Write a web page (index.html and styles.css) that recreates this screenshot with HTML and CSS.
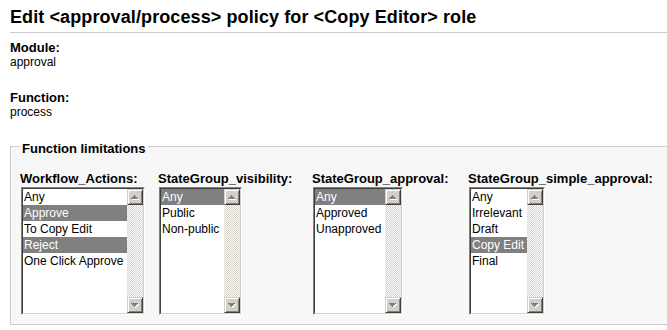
FILE: index.html
```html
<!DOCTYPE html>
<html>
<head>
<meta charset="utf-8">
<title>Edit policy</title>
<link rel="stylesheet" href="styles.css">
</head>
<body>
<div class="page">
  <h1 class="title">Edit &lt;approval/process&gt; policy for &lt;Copy Editor&gt; role</h1>

  <div class="field">
    <div class="field-label">Module:</div>
    <div class="field-value">approval</div>
  </div>

  <div class="field">
    <div class="field-label">Function:</div>
    <div class="field-value">process</div>
  </div>

  <fieldset class="limits">
    <legend class="limits-legend">Function limitations</legend>
    <div class="columns">
      <div class="column column-actions">
        <div class="col-label">Workflow_Actions:</div>
        <div class="listbox">
          <div class="listbox-inner">
            <ul class="options options-actions">
              <li class="option">Any</li>
              <li class="option selected">Approve</li>
              <li class="option">To Copy Edit</li>
              <li class="option selected">Reject</li>
              <li class="option">One Click Approve</li>
            </ul>
            <div class="scrollbar">
              <div class="sb-btn"><svg class="sb-arrow" width="8" height="5" viewBox="0 0 8 5"><path class="arrow-shadow" d="M4 1h1v1h1v1h1v1h1v1H1V4h1V3h1V2h1z"/><path class="arrow-face" d="M3 0h1v1h1v1h1v1h1v1H0V3h1V2h1V1h1z"/></svg></div>
              <div class="sb-track"></div>
              <div class="sb-btn"><svg class="sb-arrow" width="8" height="5" viewBox="0 0 8 5"><path class="arrow-shadow" d="M1 1h7v1H7v1H6v1H5v1H4V4H3V3H2V2H1z"/><path class="arrow-face" d="M0 0h7v1H6v1H5v1H4v1H3V3H2V2H1V1H0z"/></svg></div>
            </div>
          </div>
        </div>
      </div>

      <div class="column column-visibility">
        <div class="col-label">StateGroup_visibility:</div>
        <div class="listbox">
          <div class="listbox-inner">
            <ul class="options options-visibility">
              <li class="option selected">Any</li>
              <li class="option">Public</li>
              <li class="option">Non-public</li>
            </ul>
            <div class="scrollbar">
              <div class="sb-btn"><svg class="sb-arrow" width="8" height="5" viewBox="0 0 8 5"><path class="arrow-shadow" d="M4 1h1v1h1v1h1v1h1v1H1V4h1V3h1V2h1z"/><path class="arrow-face" d="M3 0h1v1h1v1h1v1h1v1H0V3h1V2h1V1h1z"/></svg></div>
              <div class="sb-track"></div>
              <div class="sb-btn"><svg class="sb-arrow" width="8" height="5" viewBox="0 0 8 5"><path class="arrow-shadow" d="M1 1h7v1H7v1H6v1H5v1H4V4H3V3H2V2H1z"/><path class="arrow-face" d="M0 0h7v1H6v1H5v1H4v1H3V3H2V2H1V1H0z"/></svg></div>
            </div>
          </div>
        </div>
      </div>

      <div class="column column-approval">
        <div class="col-label">StateGroup_approval:</div>
        <div class="listbox">
          <div class="listbox-inner">
            <ul class="options options-approval">
              <li class="option selected">Any</li>
              <li class="option">Approved</li>
              <li class="option">Unapproved</li>
            </ul>
            <div class="scrollbar">
              <div class="sb-btn"><svg class="sb-arrow" width="8" height="5" viewBox="0 0 8 5"><path class="arrow-shadow" d="M4 1h1v1h1v1h1v1h1v1H1V4h1V3h1V2h1z"/><path class="arrow-face" d="M3 0h1v1h1v1h1v1h1v1H0V3h1V2h1V1h1z"/></svg></div>
              <div class="sb-track"></div>
              <div class="sb-btn"><svg class="sb-arrow" width="8" height="5" viewBox="0 0 8 5"><path class="arrow-shadow" d="M1 1h7v1H7v1H6v1H5v1H4V4H3V3H2V2H1z"/><path class="arrow-face" d="M0 0h7v1H6v1H5v1H4v1H3V3H2V2H1V1H0z"/></svg></div>
            </div>
          </div>
        </div>
      </div>

      <div class="column column-simple">
        <div class="col-label">StateGroup_simple_approval:</div>
        <div class="listbox">
          <div class="listbox-inner">
            <ul class="options options-simple">
              <li class="option">Any</li>
              <li class="option">Irrelevant</li>
              <li class="option">Draft</li>
              <li class="option selected">Copy Edit</li>
              <li class="option">Final</li>
            </ul>
            <div class="scrollbar">
              <div class="sb-btn"><svg class="sb-arrow" width="8" height="5" viewBox="0 0 8 5"><path class="arrow-shadow" d="M4 1h1v1h1v1h1v1h1v1H1V4h1V3h1V2h1z"/><path class="arrow-face" d="M3 0h1v1h1v1h1v1h1v1H0V3h1V2h1V1h1z"/></svg></div>
              <div class="sb-track"></div>
              <div class="sb-btn"><svg class="sb-arrow" width="8" height="5" viewBox="0 0 8 5"><path class="arrow-shadow" d="M1 1h7v1H7v1H6v1H5v1H4V4H3V3H2V2H1z"/><path class="arrow-face" d="M0 0h7v1H6v1H5v1H4v1H3V3H2V2H1V1H0z"/></svg></div>
            </div>
          </div>
        </div>
      </div>
    </div>
  </fieldset>
</div>
</body>
</html>
```

FILE: styles.css
```css
html, body {
  margin: 0;
  padding: 0;
  overflow: hidden;
  background: #fff;
}

body {
  font-family: "Liberation Sans", Arial, sans-serif;
  color: #000;
}

.page {
  width: 720px;
  padding-left: 10px;
}

.title {
  margin: 0;
  padding: 7px 0 5px;
  font-size: 18px;
  line-height: 20px;
  font-weight: bold;
  letter-spacing: 0.1px;
  border-bottom: 1px solid #cccccc;
}

.field {
  margin-top: 7px;
}

.field + .field {
  margin-top: 20px;
}

.field-label {
  font-size: 13px;
  line-height: 15px;
  font-weight: bold;
}

.field-value {
  font-size: 12px;
  line-height: 15px;
}

.limits {
  margin: 16px 0 0;
  padding: 15px 9px 9px;
  border: 1px solid #cccccc;
  background: #f7f7f7;
  min-inline-size: 0;
}

.limits-legend {
  padding: 5px 2px 0;
  font-size: 13px;
  line-height: 15px;
  font-weight: bold;
}

.columns {
  display: flex;
  align-items: flex-start;
}

.column-actions { width: 138px; }
.column-visibility { width: 154px; }
.column-approval { width: 156px; }
.column-simple { width: 180px; }

.col-label {
  font-size: 13px;
  line-height: 15px;
  font-weight: bold;
  white-space: nowrap;
}

.listbox {
  display: inline-block;
  vertical-align: top;
  margin: 1px 0 0 1px;
  border: 1px solid;
  border-color: #808080 #ffffff #ffffff #808080;
}

.listbox-inner {
  display: flex;
  height: 124px;
  border: 1px solid;
  border-color: #404040 #d4d0c8 #d4d0c8 #404040;
  background: #fff;
}

.options {
  list-style: none;
  margin: 0;
  padding: 0;
  font-size: 12px;
  line-height: 16px;
}

.options-actions { width: 104px; }
.options-visibility { width: 63px; }
.options-approval { width: 70px; }
.options-simple { width: 56px; }

.option {
  height: 16px;
  padding-left: 1px;
  white-space: nowrap;
  overflow: hidden;
}

.option.selected {
  background: #808080;
  color: #fff;
}

.scrollbar {
  width: 16px;
  display: flex;
  flex-direction: column;
}

.sb-btn {
  box-sizing: border-box;
  height: 16px;
  flex: none;
  background: #d4d0c8;
  border: 1px solid;
  border-color: #d4d0c8 #404040 #404040 #d4d0c8;
  box-shadow: inset 1px 1px #ffffff, inset -1px -1px #808080;
  display: flex;
  align-items: center;
  justify-content: center;
}

.sb-arrow {
  display: block;
  shape-rendering: crispEdges;
}

.arrow-face { fill: #808080; }
.arrow-shadow { fill: #ffffff; }

.sb-track {
  flex: 1;
  background: repeating-conic-gradient(#d4d0c8 0 25%, #ffffff 0 50%) 0 0 / 2px 2px;
}
```
